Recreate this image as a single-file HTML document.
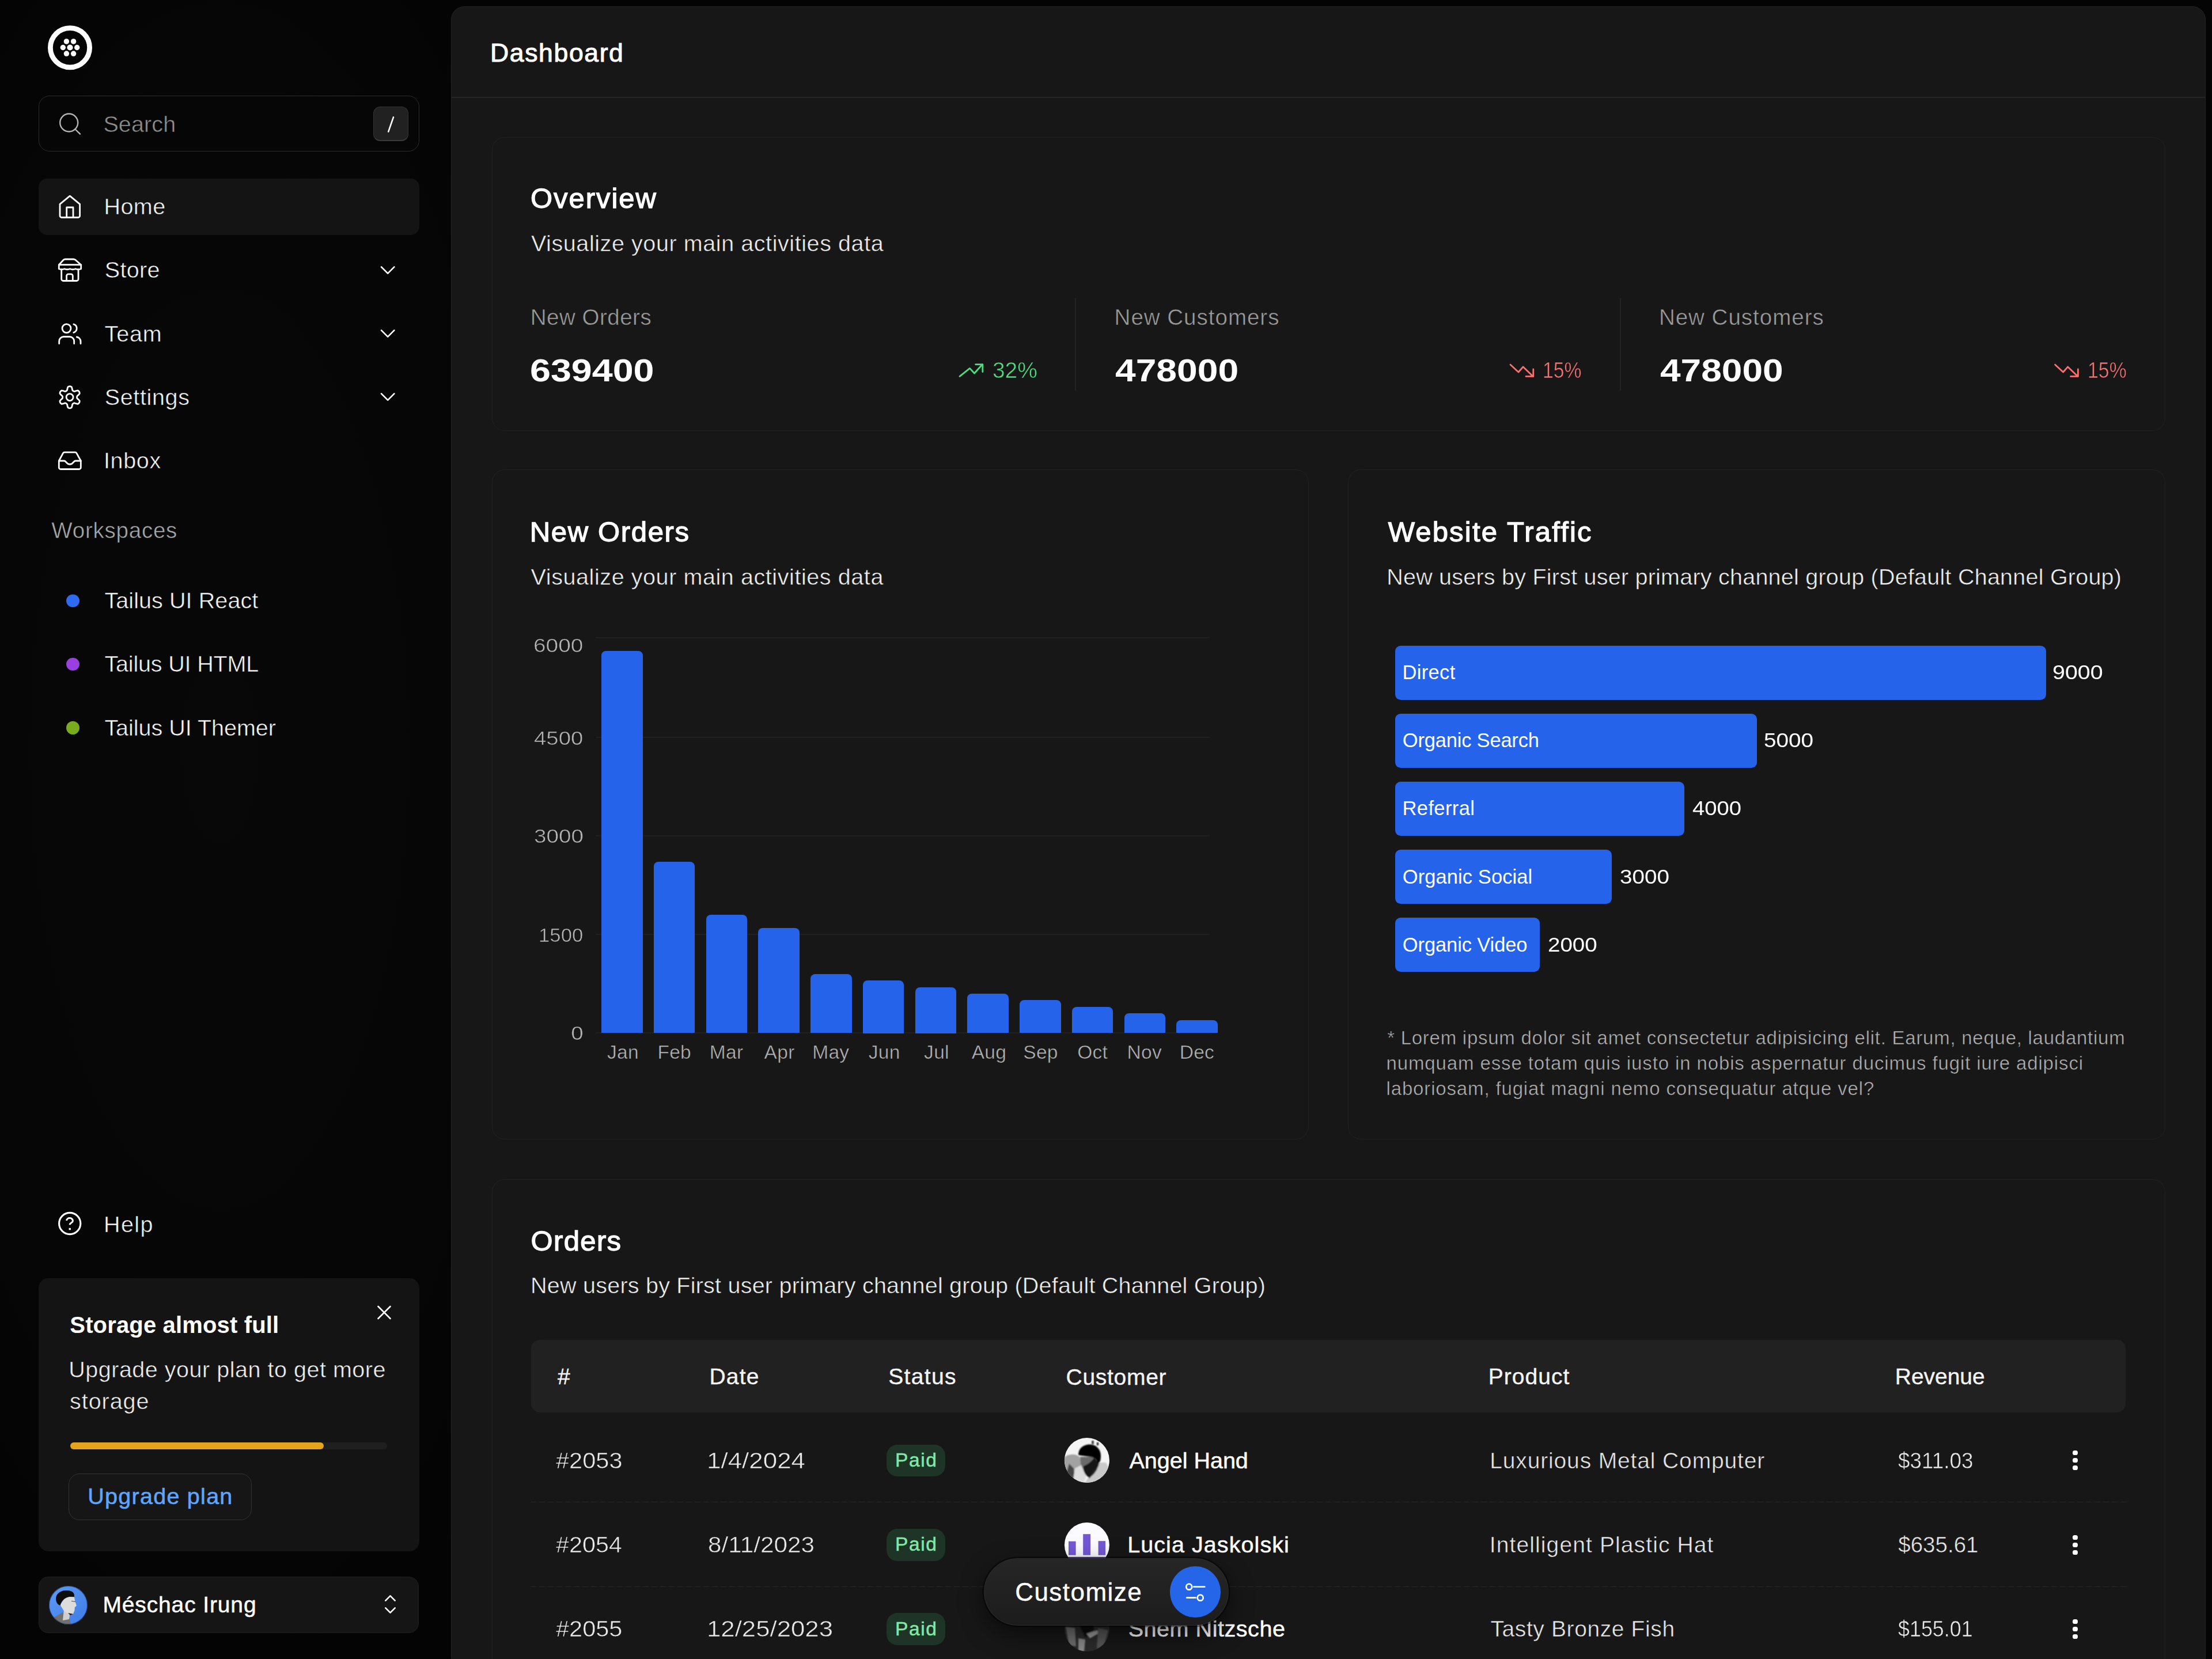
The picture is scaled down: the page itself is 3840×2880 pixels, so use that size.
<!DOCTYPE html>
<html lang="en"><head><meta charset="utf-8"><title>Dashboard</title>
<style>
html,body{margin:0;padding:0;}
body{width:3840px;height:2880px;overflow:hidden;position:relative;background:#040404;font-family:"Liberation Sans",sans-serif;color:#fff;}
.b{position:absolute;box-sizing:border-box;}
.t{position:absolute;white-space:nowrap;font-kerning:normal;}
svg{overflow:visible;}
</style></head><body>
<div class="b" style="left:0px;top:0px;width:3840px;height:2880px;background:radial-gradient(ellipse 700px 1700px at 380px 1300px, #080808 0%, #060606 60%, #040404 100%);"></div>
<aside>
<svg class="b" style="left:78px;top:40px;" width="88" height="88" viewBox="78 40 88 88" fill="none" stroke="#fff" stroke-width="2.8" stroke-linecap="round" stroke-linejoin="round"><circle cx="121.5" cy="82.7" r="34.1" stroke-width="8.8"/><circle cx="133.70" cy="82.50" r="4.7" fill="#fff" stroke="none"/><circle cx="127.60" cy="93.07" r="4.7" fill="#fff" stroke="none"/><circle cx="115.40" cy="93.07" r="4.7" fill="#fff" stroke="none"/><circle cx="109.30" cy="82.50" r="4.7" fill="#fff" stroke="none"/><circle cx="115.40" cy="71.93" r="4.7" fill="#fff" stroke="none"/><circle cx="127.60" cy="71.93" r="4.7" fill="#fff" stroke="none"/><circle cx="121.5" cy="82.5" r="5.1" fill="#fff" stroke="none"/></svg>
<div class="b" style="left:67px;top:166px;width:660.5px;height:97.3px;background:#060606;border-radius:19px;border:1.5px solid #2c2c2c;"></div>
<svg class="b" style="left:98px;top:192px;" width="48" height="48" viewBox="98 192 48 48" fill="none" stroke="#b4b4b4" stroke-width="2.4" stroke-linecap="round" stroke-linejoin="round"><circle cx="119.7" cy="213" r="15.5"/><path d="M131.2 225 L139 232.7"/></svg>
<div class="t" style="left:179.4px;top:189.7px;font-size:39.5px;line-height:51px;color:#8e8e8e;letter-spacing:0.11px;-webkit-text-stroke:0.55px #060606;">Search</div>
<div class="b" style="left:648px;top:185px;width:60.5px;height:60px;background:#212121;border-radius:12px;border:1.5px solid #343434;border-bottom:2.5px solid #3a3a3a;"></div>
<svg class="b" style="left:660px;top:195px;" width="40" height="40" viewBox="660 195 40 40" fill="none" stroke="#fff" stroke-width="2.6" stroke-linecap="round" stroke-linejoin="round"><path d="M674.2 228.6 L683 203.4"/></svg>
<div class="b" style="left:67px;top:310px;width:661px;height:97.5px;background:#141414;border-radius:15px;"></div>
<svg class="b" style="left:98px;top:334px;" width="48" height="50" viewBox="98 334 48 50" fill="none" stroke="#fff" stroke-width="2.8" stroke-linecap="round" stroke-linejoin="round"><path d="M104 354.3 L121.3 340.2 L138.6 354.3 V374.5 a3 3 0 0 1 -3 3 H107 a3 3 0 0 1 -3 -3 Z"/><path d="M115.7 377.5 V360 H127 V377.5"/></svg>
<div class="t" style="left:180.4px;top:333.1px;font-size:39.5px;line-height:51px;color:#f5f5f5;letter-spacing:0.46px;-webkit-text-stroke:0.55px #141414;">Home</div>
<svg class="b" style="left:96px;top:444px;" width="52" height="50" viewBox="96 444 52 50" fill="none" stroke="#fff" stroke-width="2.8" stroke-linecap="round" stroke-linejoin="round"><path d="M102.3 459.7 L109.9 451.5 Q111.3 450 113.3 450 H127.6 Q129.5 450 131 451.2 L140.7 459.7 Z"/><path d="M102.3 459.7 V466.8 q4.8 1.9 9.6 0 q4.8 1.9 9.6 0 q4.8 1.9 9.6 0 q4.8 1.9 9.6 0 V459.7"/><path d="M106.7 468 V484.5 a3 3 0 0 0 3 3 H133 a3 3 0 0 0 3 -3 V468"/><path d="M115.6 487.5 V478.8 a3 3 0 0 1 3 -3 H123.3 a3 3 0 0 1 3 3 V487.5"/></svg>
<div class="t" style="left:181.8px;top:443.3px;font-size:39.5px;line-height:51px;color:#f5f5f5;letter-spacing:0.32px;-webkit-text-stroke:0.55px #070707;">Store</div>
<svg class="b" style="left:96px;top:556px;" width="52" height="48" viewBox="96 556 52 48" fill="none" stroke="#fff" stroke-width="2.8" stroke-linecap="round" stroke-linejoin="round"><circle cx="115.5" cy="570.1" r="7.5"/><path d="M102.7 596.5 V592.5 a8 8 0 0 1 8 -8 H120.7 a8 8 0 0 1 8 8 V596.5"/><path d="M127.8 562.9 a7.5 7.5 0 0 1 0 14.4"/><path d="M133.3 585 a8 8 0 0 1 6.7 7.7 V596.5"/></svg>
<div class="t" style="left:181.6px;top:553.8px;font-size:39.5px;line-height:51px;color:#f5f5f5;letter-spacing:0.82px;-webkit-text-stroke:0.55px #070707;">Team</div>
<svg class="b" style="left:96px;top:664px;" width="52" height="52" viewBox="96 664 52 52" fill="none" stroke="#fff" stroke-width="2.8" stroke-linecap="round" stroke-linejoin="round"><path d="M133.50 689.60 L133.65 690.70 L134.13 691.90 L136.27 693.66 L138.17 695.81 L138.14 697.55 L137.55 699.10 L136.51 700.39 L135.02 701.28 L132.20 700.70 L129.61 699.74 L128.32 699.92 L127.30 700.34 L126.42 701.01 L125.63 702.04 L125.16 704.77 L124.25 707.49 L122.74 708.33 L121.10 708.60 L119.46 708.33 L117.95 707.49 L117.04 704.77 L116.57 702.04 L115.78 701.01 L114.90 700.34 L113.88 699.92 L112.59 699.74 L110.00 700.70 L107.18 701.28 L105.69 700.39 L104.65 699.10 L104.06 697.55 L104.03 695.81 L105.93 693.66 L108.07 691.90 L108.55 690.70 L108.70 689.60 L108.55 688.50 L108.07 687.30 L105.93 685.54 L104.03 683.39 L104.06 681.65 L104.65 680.10 L105.69 678.81 L107.18 677.92 L110.00 678.50 L112.59 679.46 L113.88 679.28 L114.90 678.86 L115.78 678.19 L116.57 677.16 L117.04 674.43 L117.95 671.71 L119.46 670.87 L121.10 670.60 L122.74 670.87 L124.25 671.71 L125.16 674.43 L125.63 677.16 L126.42 678.19 L127.30 678.86 L128.32 679.28 L129.61 679.46 L132.20 678.50 L135.02 677.92 L136.51 678.81 L137.55 680.10 L138.14 681.65 L138.17 683.39 L136.27 685.54 L134.13 687.30 L133.65 688.50 Z"/><circle cx="121.1" cy="689.6" r="6"/></svg>
<div class="t" style="left:181.8px;top:664.1px;font-size:39.5px;line-height:51px;color:#f5f5f5;letter-spacing:0.63px;-webkit-text-stroke:0.55px #070707;">Settings</div>
<svg class="b" style="left:96px;top:780px;" width="52" height="42" viewBox="96 780 52 42" fill="none" stroke="#fff" stroke-width="2.8" stroke-linecap="round" stroke-linejoin="round"><path d="M102.3 800 L109.5 786.6 a3 3 0 0 1 2.6 -1.5 H130.3 a3 3 0 0 1 2.6 1.5 L140.3 800 V811.5 a3 3 0 0 1 -3 3 H105.3 a3 3 0 0 1 -3 -3 Z"/><path d="M102.3 800 H111.5 c3.5 0 3.5 6 9.7 6 c6.2 0 6.2 -6 9.7 -6 H140.3"/></svg>
<div class="t" style="left:180.0px;top:774.3px;font-size:39.5px;line-height:51px;color:#f5f5f5;letter-spacing:0.64px;-webkit-text-stroke:0.55px #070707;">Inbox</div>
<svg class="b" style="left:655px;top:454.7px;" width="36" height="28" viewBox="655 454.7 36 28" fill="none" stroke="#fff" stroke-width="2.6" stroke-linecap="round" stroke-linejoin="round"><path d="M662 463.09999999999997 L673.2 474.3 L684.4 463.09999999999997"/></svg>
<svg class="b" style="left:655px;top:565px;" width="36" height="28" viewBox="655 565 36 28" fill="none" stroke="#fff" stroke-width="2.6" stroke-linecap="round" stroke-linejoin="round"><path d="M662 573.4 L673.2 584.6 L684.4 573.4"/></svg>
<svg class="b" style="left:655px;top:675.3px;" width="36" height="28" viewBox="655 675.3 36 28" fill="none" stroke="#fff" stroke-width="2.6" stroke-linecap="round" stroke-linejoin="round"><path d="M662 683.6999999999999 L673.2 694.9 L684.4 683.6999999999999"/></svg>
<div class="t" style="left:89.3px;top:896.2px;font-size:38.5px;line-height:50px;color:#a8a8a8;letter-spacing:0.77px;-webkit-text-stroke:0.55px #070707;">Workspaces</div>
<div class="b" style="left:115.4px;top:1031.7px;width:22.4px;height:22.4px;background:#2f6bf0;border-radius:12px;"></div>
<div class="t" style="left:181.4px;top:1017.4px;font-size:39.5px;line-height:51px;color:#f5f5f5;letter-spacing:0.09px;-webkit-text-stroke:0.55px #070707;">Tailus UI React</div>
<div class="b" style="left:115.4px;top:1141.6px;width:22.4px;height:22.4px;background:#9a3fe0;border-radius:12px;"></div>
<div class="t" style="left:181.4px;top:1127.3px;font-size:39.5px;line-height:51px;color:#f5f5f5;letter-spacing:-0.16px;-webkit-text-stroke:0.55px #070707;">Tailus UI HTML</div>
<div class="b" style="left:115.4px;top:1252.3px;width:22.4px;height:22.4px;background:#79ab1c;border-radius:12px;"></div>
<div class="t" style="left:181.4px;top:1238.0px;font-size:39.5px;line-height:51px;color:#f5f5f5;letter-spacing:-0.02px;-webkit-text-stroke:0.55px #070707;">Tailus UI Themer</div>
<svg class="b" style="left:96px;top:2099px;" width="50" height="50" viewBox="96 2099 50 50" fill="none" stroke="#fff" stroke-width="3.0" stroke-linecap="round" stroke-linejoin="round"><circle cx="121.2" cy="2124" r="18.6" stroke-width="3.1"/><path d="M115.6 2118.9 a5.4 4.6 0 0 1 10.8 0.5 c0 3.4 -5.3 3.5 -5.3 6.9" stroke-linecap="butt"/><rect x="119.6" y="2131.8" width="3.3" height="3.4" fill="#fff" stroke="none"/></svg>
<div class="t" style="left:180.0px;top:2099.8px;font-size:39.5px;line-height:51px;color:#f5f5f5;letter-spacing:1.40px;-webkit-text-stroke:0.55px #070707;">Help</div>
<div class="b" style="left:67px;top:2219px;width:660.5px;height:473.5px;background:#141414;border-radius:17px;"></div>
<svg class="b" style="left:650px;top:2262px;" width="34" height="34" viewBox="650 2262 34 34" fill="none" stroke="#fff" stroke-width="2.6" stroke-linecap="round" stroke-linejoin="round"><path d="M656.5 2268 L677.5 2289 M677.5 2268 L656.5 2289"/></svg>
<div class="t" style="left:121.3px;top:2274.1px;font-size:40px;line-height:52px;color:#fff;font-weight:700;letter-spacing:0.16px;">Storage almost full</div>
<div class="t" style="left:119.2px;top:2352.3px;font-size:39.5px;line-height:51px;color:#f0f0f0;letter-spacing:0.52px;-webkit-text-stroke:0.55px #141414;">Upgrade your plan to get more</div>
<div class="t" style="left:121.1px;top:2407.3px;font-size:39.5px;line-height:51px;color:#f0f0f0;letter-spacing:0.94px;-webkit-text-stroke:0.55px #141414;">storage</div>
<div class="b" style="left:122px;top:2504px;width:550px;height:12px;background:#1f1f1f;border-radius:6px;"></div>
<div class="b" style="left:122px;top:2504px;width:440px;height:12px;background:#e6a31c;border-radius:6px;"></div>
<div class="b" style="left:119px;top:2557.5px;width:317.5px;height:81.5px;background:#161616;border-radius:19px;border:1.5px solid #333;"></div>
<div class="t" style="left:152.3px;top:2572.3px;font-size:39.5px;line-height:51px;color:#60a5fa;letter-spacing:1.26px;-webkit-text-stroke:0.6px #60a5fa;">Upgrade plan</div>
<div class="b" style="left:67px;top:2737px;width:660px;height:98px;background:#151515;border-radius:17px;border:1.5px solid #1f1f1f;"></div>
<svg class="b" style="left:85px;top:2753px" width="67" height="67" viewBox="85 2753 67 67"><defs><clipPath id="cu"><circle cx="118.5" cy="2786.5" r="33.5"/></clipPath><linearGradient id="gu" x1="0" y1="0" x2="1" y2="1"><stop offset="0" stop-color="#5c9cf5"/><stop offset="1" stop-color="#3f7be6"/></linearGradient><filter id="fu" x="-20%" y="-20%" width="140%" height="140%"><feGaussianBlur stdDeviation="0.7"/></filter></defs><g clip-path="url(#cu)"><rect x="85" y="2753" width="67" height="67" fill="url(#gu)"/><g filter="url(#fu)"><path d="M93 2808 L109 2799 L121 2810 L123 2821 L96 2822 Z" fill="#6f6f6f"/><path d="M111 2794 L109 2813 L120 2811 L121.5 2800 Z" fill="#cfcfcf"/><path d="M104.5 2786 L112 2775 L121 2771.5 L128.8 2772 L130.2 2779 L132.8 2787.5 L129.8 2790.3 L129.5 2795.5 L127 2801.8 L119 2801.5 L110.5 2796 Z" fill="#dcdcdc"/><path d="M118 2800 L127 2802 L122 2804 Z" fill="#222"/><path d="M97.3 2778 C95.8 2766 106 2760.3 117 2761 C125.5 2761.5 129.8 2765 129 2772.3 L121 2772 C113 2773 106.5 2778.5 104.6 2787 C100.5 2786 98 2782.5 97.3 2778 Z" fill="#0b0b0f"/><path d="M124 2779.5 L131 2780.5" stroke="#444" stroke-width="1.2"/></g></g><circle cx="118.5" cy="2786.5" r="33" fill="none" stroke="#0a1630" stroke-opacity=".55" stroke-width="1.2"/></svg>
<div class="t" style="left:178.4px;top:2759.5px;font-size:39px;line-height:51px;color:#fff;letter-spacing:0.87px;-webkit-text-stroke:0.5px #fff;">Méschac Irung</div>
<svg class="b" style="left:662px;top:2766px;" width="32" height="40" viewBox="662 2766 32 40" fill="none" stroke="#fff" stroke-width="2.6" stroke-linecap="round" stroke-linejoin="round"><path d="M669.3 2778.6 L677.5 2770.4 L685.7 2778.6 M669.3 2791.4 L677.5 2799.6 L685.7 2791.4"/></svg>
</aside>
<main>
<div class="b" style="left:783px;top:11px;width:3046px;height:2889px;background:#171717;border-radius:23px;border:1.5px solid #232323;"></div>
<div class="b" style="left:784px;top:168px;width:3044px;height:2px;background:#242424;"></div>
<div class="t" style="left:851.1px;top:62.5px;font-size:44.5px;line-height:58px;color:#fff;letter-spacing:1.63px;-webkit-text-stroke:1.0px #fff;">Dashboard</div>
<div class="b" style="left:853.5px;top:237.5px;width:2905.0px;height:510.0px;background:#171717;border-radius:22px;border:1.5px solid #222;"></div>
<div class="t" style="left:920.9px;top:312.4px;font-size:49px;line-height:64px;color:#fff;letter-spacing:1.97px;-webkit-text-stroke:1.3px #fff;">Overview</div>
<div class="t" style="left:921.9px;top:396.7px;font-size:39.5px;line-height:51px;color:#f0f0f0;letter-spacing:0.58px;-webkit-text-stroke:0.55px #171717;">Visualize your main activities data</div>
<div class="t" style="left:920.8px;top:526.0px;font-size:38.5px;line-height:50px;color:#9c9c9c;letter-spacing:0.50px;-webkit-text-stroke:0.55px #171717;">New Orders</div>
<div class="t" style="left:919.6px;top:605.9px;font-size:56px;line-height:73px;color:#fff;font-weight:700;transform:scaleX(1.1533);transform-origin:0 0;">639400</div>
<div class="b" style="left:1866px;top:517px;width:2px;height:161px;background:#232323;"></div>
<div class="b" style="left:2812px;top:517px;width:2px;height:161px;background:#232323;"></div>
<svg class="b" style="left:1660px;top:622px;" width="52" height="40" viewBox="1660 622 52 40" fill="none" stroke="#4ade80" stroke-width="2.8" stroke-linecap="round" stroke-linejoin="round"><path d="M1666 653.3 L1683.5 639.4 L1691.5 648 L1705.3 632.8"/><path d="M1693.6 632.6 H1705.8 V645.6"/></svg>
<div class="t" style="left:1723.2px;top:616.6px;font-size:39.5px;line-height:51px;color:#4ade80;transform:scaleX(0.9841);transform-origin:0 0;-webkit-text-stroke:0.55px #171717;">32%</div>
<div class="t" style="left:1934.6px;top:526.0px;font-size:38.5px;line-height:50px;color:#9c9c9c;letter-spacing:1.00px;-webkit-text-stroke:0.55px #171717;">New Customers</div>
<div class="t" style="left:1936.0px;top:605.9px;font-size:56px;line-height:73px;color:#fff;font-weight:700;transform:scaleX(1.1457);transform-origin:0 0;">478000</div>
<svg class="b" style="left:2615px;top:622px;" width="52" height="40" viewBox="2615 622 52 40" fill="none" stroke="#f87171" stroke-width="2.8" stroke-linecap="round" stroke-linejoin="round"><path d="M2622.0 633 L2636.0 646 L2644.0 636.8 L2661.2 653.2"/><path d="M2649.0 653.4 H2661.8 V641"/></svg>
<div class="t" style="left:2678.2px;top:616.6px;font-size:39.5px;line-height:51px;color:#f87171;transform:scaleX(0.8543);transform-origin:0 0;-webkit-text-stroke:0.55px #171717;">15%</div>
<div class="t" style="left:2879.9px;top:525.7px;font-size:38.5px;line-height:50px;color:#9c9c9c;letter-spacing:1.00px;-webkit-text-stroke:0.55px #171717;">New Customers</div>
<div class="t" style="left:2882.0px;top:605.9px;font-size:56px;line-height:73px;color:#fff;font-weight:700;transform:scaleX(1.1430);transform-origin:0 0;">478000</div>
<svg class="b" style="left:3560px;top:622px;" width="52" height="40" viewBox="3560 622 52 40" fill="none" stroke="#f87171" stroke-width="2.8" stroke-linecap="round" stroke-linejoin="round"><path d="M3567.6 633 L3581.6 646 L3589.6 636.8 L3606.8 653.2"/><path d="M3594.6 653.4 H3607.4 V641"/></svg>
<div class="t" style="left:3623.7px;top:616.6px;font-size:39.5px;line-height:51px;color:#f87171;transform:scaleX(0.8570);transform-origin:0 0;-webkit-text-stroke:0.55px #171717;">15%</div>
<div class="b" style="left:854px;top:815px;width:1418px;height:1163px;background:#171717;border-radius:22px;border:1.5px solid #222;"></div>
<div class="t" style="left:919.7px;top:891.0px;font-size:49px;line-height:64px;color:#fff;letter-spacing:1.67px;-webkit-text-stroke:1.3px #fff;">New Orders</div>
<div class="t" style="left:921.6px;top:976.2px;font-size:39.5px;line-height:51px;color:#f0f0f0;letter-spacing:0.58px;-webkit-text-stroke:0.55px #171717;">Visualize your main activities data</div>
<div class="b" style="left:1034px;top:1106.3px;width:1066px;height:1.4px;background:#202020;"></div>
<div class="b" style="left:1034px;top:1279.3px;width:1066px;height:1.4px;background:#202020;"></div>
<div class="b" style="left:1034px;top:1450.3px;width:1066px;height:1.4px;background:#202020;"></div>
<div class="b" style="left:1034px;top:1621.3px;width:1066px;height:1.4px;background:#202020;"></div>
<div class="b" style="left:1034px;top:1792.3px;width:1066px;height:1.4px;background:#202020;"></div>
<div class="b" style="left:1044.0px;top:1130.4px;width:71.5px;height:663.1px;background:#2563eb;border-radius:8px 8px 0 0;"></div>
<div class="t" style="left:1054.0px;top:1805.4px;font-size:33.5px;line-height:44px;color:#b4b4b4;letter-spacing:0.3px;-webkit-text-stroke:0.55px #171717;">Jan</div>
<div class="b" style="left:1134.8px;top:1496.2px;width:71.4px;height:297.3px;background:#2563eb;border-radius:8px 8px 0 0;"></div>
<div class="t" style="left:1141.4px;top:1805.4px;font-size:33.5px;line-height:44px;color:#b4b4b4;letter-spacing:0.3px;-webkit-text-stroke:0.55px #171717;">Feb</div>
<div class="b" style="left:1225.5px;top:1587.7px;width:71.5px;height:205.8px;background:#2563eb;border-radius:8px 8px 0 0;"></div>
<div class="t" style="left:1231.8px;top:1805.4px;font-size:33.5px;line-height:44px;color:#b4b4b4;letter-spacing:0.3px;-webkit-text-stroke:0.55px #171717;">Mar</div>
<div class="b" style="left:1316.2px;top:1610.6px;width:71.6px;height:182.9px;background:#2563eb;border-radius:8px 8px 0 0;"></div>
<div class="t" style="left:1326.6px;top:1805.4px;font-size:33.5px;line-height:44px;color:#b4b4b4;letter-spacing:0.3px;-webkit-text-stroke:0.55px #171717;">Apr</div>
<div class="b" style="left:1407.0px;top:1690.6px;width:71.5px;height:102.9px;background:#2563eb;border-radius:8px 8px 0 0;"></div>
<div class="t" style="left:1410.2px;top:1805.4px;font-size:33.5px;line-height:44px;color:#b4b4b4;letter-spacing:0.3px;-webkit-text-stroke:0.55px #171717;">May</div>
<div class="b" style="left:1497.8px;top:1702.0px;width:71.4px;height:91.5px;background:#2563eb;border-radius:8px 8px 0 0;"></div>
<div class="t" style="left:1507.8px;top:1805.4px;font-size:33.5px;line-height:44px;color:#b4b4b4;letter-spacing:0.3px;-webkit-text-stroke:0.55px #171717;">Jun</div>
<div class="b" style="left:1588.5px;top:1713.5px;width:71.5px;height:80.0px;background:#2563eb;border-radius:8px 8px 0 0;"></div>
<div class="t" style="left:1604.1px;top:1805.4px;font-size:33.5px;line-height:44px;color:#b4b4b4;letter-spacing:0.3px;-webkit-text-stroke:0.55px #171717;">Jul</div>
<div class="b" style="left:1679.2px;top:1724.9px;width:71.6px;height:68.6px;background:#2563eb;border-radius:8px 8px 0 0;"></div>
<div class="t" style="left:1686.7px;top:1805.4px;font-size:33.5px;line-height:44px;color:#b4b4b4;letter-spacing:0.3px;-webkit-text-stroke:0.55px #171717;">Aug</div>
<div class="b" style="left:1770.0px;top:1736.3px;width:71.5px;height:57.2px;background:#2563eb;border-radius:8px 8px 0 0;"></div>
<div class="t" style="left:1776.3px;top:1805.4px;font-size:33.5px;line-height:44px;color:#b4b4b4;letter-spacing:0.3px;-webkit-text-stroke:0.55px #171717;">Sep</div>
<div class="b" style="left:1860.8px;top:1747.8px;width:71.4px;height:45.7px;background:#2563eb;border-radius:8px 8px 0 0;"></div>
<div class="t" style="left:1870.2px;top:1805.4px;font-size:33.5px;line-height:44px;color:#b4b4b4;letter-spacing:0.3px;-webkit-text-stroke:0.55px #171717;">Oct</div>
<div class="b" style="left:1951.5px;top:1759.2px;width:71.5px;height:34.3px;background:#2563eb;border-radius:8px 8px 0 0;"></div>
<div class="t" style="left:1956.6px;top:1805.4px;font-size:33.5px;line-height:44px;color:#b4b4b4;letter-spacing:0.3px;-webkit-text-stroke:0.55px #171717;">Nov</div>
<div class="b" style="left:2042.2px;top:1770.6px;width:71.6px;height:22.9px;background:#2563eb;border-radius:8px 8px 0 0;"></div>
<div class="t" style="left:2047.7px;top:1805.4px;font-size:33.5px;line-height:44px;color:#b4b4b4;letter-spacing:0.3px;-webkit-text-stroke:0.55px #171717;">Dec</div>
<div class="t" style="left:926.2px;top:1098.9px;font-size:33.5px;line-height:44px;color:#b4b4b4;transform:scaleX(1.1596);transform-origin:0 0;-webkit-text-stroke:0.55px #171717;">6000</div>
<div class="t" style="left:927.3px;top:1259.9px;font-size:33.5px;line-height:44px;color:#b4b4b4;transform:scaleX(1.1446);transform-origin:0 0;-webkit-text-stroke:0.55px #171717;">4500</div>
<div class="t" style="left:926.7px;top:1430.4px;font-size:33.5px;line-height:44px;color:#b4b4b4;transform:scaleX(1.1527);transform-origin:0 0;-webkit-text-stroke:0.55px #171717;">3000</div>
<div class="t" style="left:935.1px;top:1601.8px;font-size:33.5px;line-height:44px;color:#b4b4b4;transform:scaleX(1.0382);transform-origin:0 0;-webkit-text-stroke:0.55px #171717;">1500</div>
<div class="t" style="left:993.7px;top:1771.7px;font-size:33.5px;line-height:44px;color:#b4b4b4;transform:scaleX(1.15);transform-origin:100% 0;-webkit-text-stroke:0.55px #171717;">0</div>
<div class="b" style="left:2340px;top:815px;width:1418.5px;height:1163px;background:#171717;border-radius:22px;border:1.5px solid #222;"></div>
<div class="t" style="left:2409.7px;top:891.0px;font-size:49px;line-height:64px;color:#fff;letter-spacing:2.19px;-webkit-text-stroke:1.3px #fff;">Website Traffic</div>
<div class="t" style="left:2407.2px;top:975.6px;font-size:39.5px;line-height:51px;color:#f0f0f0;letter-spacing:0.23px;-webkit-text-stroke:0.55px #171717;">New users by First user primary channel group (Default Channel Group)</div>
<div class="b" style="left:2421.5px;top:1120.5px;width:1130.8px;height:94.0px;background:#2563eb;border-radius:9.5px;"></div>
<div class="t" style="left:2434.5px;top:1145.2px;font-size:34.5px;line-height:45px;color:#fff;letter-spacing:0.34px;">Direct</div>
<div class="t" style="left:3562.9px;top:1145.2px;font-size:34.5px;line-height:45px;color:#fff;transform:scaleX(1.1425);transform-origin:0 0;">9000</div>
<div class="b" style="left:2421.5px;top:1238.6px;width:628.3px;height:94.0px;background:#2563eb;border-radius:9.5px;"></div>
<div class="t" style="left:2434.8px;top:1263.3px;font-size:34.5px;line-height:45px;color:#fff;letter-spacing:-0.20px;">Organic Search</div>
<div class="t" style="left:3062.3px;top:1263.3px;font-size:34.5px;line-height:45px;color:#fff;transform:scaleX(1.1227);transform-origin:0 0;">5000</div>
<div class="b" style="left:2421.5px;top:1356.7px;width:502.6px;height:94.0px;background:#2563eb;border-radius:9.5px;"></div>
<div class="t" style="left:2434.5px;top:1381.4px;font-size:34.5px;line-height:45px;color:#fff;letter-spacing:0.39px;">Referral</div>
<div class="t" style="left:2937.7px;top:1381.4px;font-size:34.5px;line-height:45px;color:#fff;transform:scaleX(1.1071);transform-origin:0 0;">4000</div>
<div class="b" style="left:2421.5px;top:1474.8px;width:376.9px;height:94.0px;background:#2563eb;border-radius:9.5px;"></div>
<div class="t" style="left:2434.8px;top:1499.5px;font-size:34.5px;line-height:45px;color:#fff;letter-spacing:0.08px;">Organic Social</div>
<div class="t" style="left:2812.4px;top:1499.5px;font-size:34.5px;line-height:45px;color:#fff;transform:scaleX(1.1189);transform-origin:0 0;">3000</div>
<div class="b" style="left:2421.5px;top:1592.9px;width:251.3px;height:94.0px;background:#2563eb;border-radius:9.5px;"></div>
<div class="t" style="left:2434.8px;top:1617.6px;font-size:34.5px;line-height:45px;color:#fff;letter-spacing:-0.11px;">Organic Video</div>
<div class="t" style="left:2686.7px;top:1617.6px;font-size:34.5px;line-height:45px;color:#fff;transform:scaleX(1.1172);transform-origin:0 0;">2000</div>
<div class="t" style="left:2408.2px;top:1780.1px;font-size:33px;line-height:43px;color:#b2b2b2;letter-spacing:0.74px;-webkit-text-stroke:0.55px #171717;">* Lorem ipsum dolor sit amet consectetur adipisicing elit. Earum, neque, laudantium</div>
<div class="t" style="left:2406.5px;top:1824.1px;font-size:33px;line-height:43px;color:#b2b2b2;letter-spacing:0.88px;-webkit-text-stroke:0.55px #171717;">numquam esse totam quis iusto in nobis aspernatur ducimus fugit iure adipisci</div>
<div class="t" style="left:2406.5px;top:1868.1px;font-size:33px;line-height:43px;color:#b2b2b2;letter-spacing:0.85px;-webkit-text-stroke:0.55px #171717;">laboriosam, fugiat magni nemo consequatur atque vel?</div>
<div class="b" style="left:854px;top:2047px;width:2904.5px;height:913px;background:#171717;border-radius:22px;border:1.5px solid #222;"></div>
<div class="t" style="left:921.5px;top:2122.4px;font-size:49px;line-height:64px;color:#fff;letter-spacing:1.37px;-webkit-text-stroke:1.3px #fff;">Orders</div>
<div class="t" style="left:921.1px;top:2205.8px;font-size:39.5px;line-height:51px;color:#f0f0f0;letter-spacing:0.23px;-webkit-text-stroke:0.55px #171717;">New users by First user primary channel group (Default Channel Group)</div>
<div class="b" style="left:921.5px;top:2325.6px;width:2768.0px;height:126.4px;background:#212121;border-radius:15px;"></div>
<div class="t" style="left:968.0px;top:2364.2px;font-size:39px;line-height:51px;color:#f5f5f5;-webkit-text-stroke:0.4px #f5f5f5;">#</div>
<div class="t" style="left:1231.5px;top:2364.2px;font-size:39px;line-height:51px;color:#f5f5f5;letter-spacing:1.18px;-webkit-text-stroke:0.4px #f5f5f5;">Date</div>
<div class="t" style="left:1542.2px;top:2364.2px;font-size:39px;line-height:51px;color:#f5f5f5;letter-spacing:1.36px;-webkit-text-stroke:0.4px #f5f5f5;">Status</div>
<div class="t" style="left:1850.6px;top:2364.5px;font-size:39px;line-height:51px;color:#f5f5f5;letter-spacing:0.71px;-webkit-text-stroke:0.4px #f5f5f5;">Customer</div>
<div class="t" style="left:2583.8px;top:2364.3px;font-size:39px;line-height:51px;color:#f5f5f5;letter-spacing:1.01px;-webkit-text-stroke:0.4px #f5f5f5;">Product</div>
<div class="t" style="left:3289.8px;top:2364.0px;font-size:39px;line-height:51px;color:#f5f5f5;letter-spacing:-0.05px;-webkit-text-stroke:0.4px #f5f5f5;">Revenue</div>
<div class="t" style="left:964.6px;top:2510.5px;font-size:38.5px;line-height:50px;color:#e8e8e8;transform:scaleX(1.0788);transform-origin:0 0;-webkit-text-stroke:0.55px #171717;">#2053</div>
<div class="t" style="left:1227.2px;top:2510.5px;font-size:38.5px;line-height:50px;color:#e8e8e8;transform:scaleX(1.1414);transform-origin:0 0;-webkit-text-stroke:0.55px #171717;">1/4/2024</div>
<div class="b" style="left:1539.4px;top:2507.8px;width:102.0px;height:55.5px;background:#1d3427;border-radius:19px;"></div>
<div class="t" style="left:1553.9px;top:2513.0px;font-size:33.5px;line-height:44px;color:#82e8a6;letter-spacing:1.65px;-webkit-text-stroke:0.5px #82e8a6;">Paid</div>
<svg class="b" style="left:1847px;top:2495.3px" width="80" height="80" viewBox="1847 2495.3 80 80"><defs><clipPath id="ca0"><circle cx="1886.9" cy="2535.3" r="39"/></clipPath><filter id="fa0" x="-20%" y="-20%" width="140%" height="140%"><feGaussianBlur stdDeviation="1.3"/></filter></defs><g clip-path="url(#ca0)"><rect x="1847" y="2495.3" width="80" height="80" fill="#f4f4f4"/><g filter="url(#fa0)"><path d="M1846 2531.3 C1856 2523.3 1866 2523.3 1874 2529.3 L1880 2545.3 L1868 2561.3 L1850 2559.3 Z" fill="#a2a2a2"/><path d="M1856 2541.3 L1864 2549.3 L1866 2565.3 L1858 2571.3 L1852 2555.3 Z" fill="#444"/><path d="M1892 2561.3 L1908 2539.3 L1920 2539.3 L1928 2555.3 L1926 2577.3 L1880 2579.3 Z" fill="#c9c9c9"/><path d="M1866 2549.3 L1878 2543.3 L1886 2561.3 L1880 2579.3 L1862 2575.3 Z" fill="#dcdcdc"/><path d="M1875 2529.3 L1900 2529.3 L1906 2541.3 L1896 2559.3 L1882 2555.3 L1876 2541.3 Z" fill="#6a6a6a"/><path d="M1881 2545.3 C1888 2543.3 1895 2537.3 1899 2531.3 L1908 2539.3 C1906 2551.3 1899 2561.3 1891 2565.3 C1884 2562.3 1880 2554.3 1881 2545.3 Z" fill="#151515"/><path d="M1872 2526.3 C1872 2514.3 1881 2507.8 1892 2507.8 C1903 2507.8 1911 2516.3 1911 2527.3 C1911 2534.3 1910 2538.3 1907 2541.3 C1905 2534.3 1900 2530.3 1893 2529.3 C1886 2528.3 1878 2527.3 1872 2526.3 Z" fill="#030303"/><path d="M1897 2507.3 v-6 M1905.5 2509.3 v-5" stroke="#1c1c1c" stroke-width="3"/><path d="M1891 2566.3 L1907 2543.3" stroke="#2a2a2a" stroke-width="1.6"/></g></g></svg>
<div class="t" style="left:1960.4px;top:2509.6px;font-size:39.5px;line-height:51px;color:#fff;-webkit-text-stroke:0.5px #fff;">Angel Hand</div>
<div class="t" style="left:2586.2px;top:2509.8px;font-size:39px;line-height:51px;color:#e8e8e8;letter-spacing:0.86px;-webkit-text-stroke:0.55px #171717;">Luxurious Metal Computer</div>
<div class="t" style="left:3295.3px;top:2510.5px;font-size:38.5px;line-height:50px;color:#e8e8e8;transform:scaleX(0.9577);transform-origin:0 0;-webkit-text-stroke:0.55px #171717;">$311.03</div>
<div class="b" style="left:3598.2px;top:2518.2000000000003px;width:8.8px;height:8.2px;background:#fff;border-radius:3.6px;"></div>
<div class="b" style="left:3598.2px;top:2531.2000000000003px;width:8.8px;height:8.2px;background:#fff;border-radius:3.6px;"></div>
<div class="b" style="left:3598.2px;top:2544.2000000000003px;width:8.8px;height:8.2px;background:#fff;border-radius:3.6px;"></div>
<div class="b" style="left:921px;top:2607.1px;width:2774px;height:1.4px;background:repeating-linear-gradient(90deg,#272727 0 10px,#1c1c1c 10px 15px);"></div>
<div class="t" style="left:964.6px;top:2656.8px;font-size:38.5px;line-height:50px;color:#e8e8e8;transform:scaleX(1.0730);transform-origin:0 0;-webkit-text-stroke:0.55px #171717;">#2054</div>
<div class="t" style="left:1228.8px;top:2656.8px;font-size:38.5px;line-height:50px;color:#e8e8e8;transform:scaleX(1.0984);transform-origin:0 0;-webkit-text-stroke:0.55px #171717;">8/11/2023</div>
<div class="b" style="left:1539.4px;top:2654.1000000000004px;width:102.0px;height:55.5px;background:#1d3427;border-radius:19px;"></div>
<div class="t" style="left:1553.9px;top:2659.3px;font-size:33.5px;line-height:44px;color:#82e8a6;letter-spacing:1.65px;-webkit-text-stroke:0.5px #82e8a6;">Paid</div>
<svg class="b" style="left:1847px;top:2641.6000000000004px" width="80" height="80" viewBox="1847 2641.6000000000004 80 80"><defs><clipPath id="ca1"><circle cx="1886.9" cy="2681.6000000000004" r="39"/></clipPath><filter id="fa1" x="-20%" y="-20%" width="140%" height="140%"><feGaussianBlur stdDeviation="1.3"/></filter></defs><g clip-path="url(#ca1)"><rect x="1847" y="2641.6000000000004" width="80" height="80" fill="#fbfaff"/><rect x="1855" y="2675.3" width="12.6" height="24" fill="#7258d3"/><rect x="1880.2" y="2662.8" width="12.8" height="36.5" fill="#7258d3"/><rect x="1906.6" y="2674.8" width="12.4" height="24.5" fill="#7258d3"/><rect x="1847" y="2702.6000000000004" width="80" height="20" fill="#7258d3"/></g></svg>
<div class="t" style="left:1957.2px;top:2655.9px;font-size:39.5px;line-height:51px;color:#fff;letter-spacing:1.07px;-webkit-text-stroke:0.5px #fff;">Lucia Jaskolski</div>
<div class="t" style="left:2585.8px;top:2656.1px;font-size:39px;line-height:51px;color:#e8e8e8;letter-spacing:1.11px;-webkit-text-stroke:0.55px #171717;">Intelligent Plastic Hat</div>
<div class="t" style="left:3295.3px;top:2656.8px;font-size:38.5px;line-height:50px;color:#e8e8e8;-webkit-text-stroke:0.55px #171717;">$635.61</div>
<div class="b" style="left:3598.2px;top:2664.5000000000005px;width:8.8px;height:8.2px;background:#fff;border-radius:3.6px;"></div>
<div class="b" style="left:3598.2px;top:2677.5000000000005px;width:8.8px;height:8.2px;background:#fff;border-radius:3.6px;"></div>
<div class="b" style="left:3598.2px;top:2690.5000000000005px;width:8.8px;height:8.2px;background:#fff;border-radius:3.6px;"></div>
<div class="b" style="left:921px;top:2754.1px;width:2774px;height:1.4px;background:repeating-linear-gradient(90deg,#272727 0 10px,#1c1c1c 10px 15px);"></div>
<div class="t" style="left:964.6px;top:2803.1px;font-size:38.5px;line-height:50px;color:#e8e8e8;transform:scaleX(1.0780);transform-origin:0 0;-webkit-text-stroke:0.55px #171717;">#2055</div>
<div class="t" style="left:1227.3px;top:2803.1px;font-size:38.5px;line-height:50px;color:#e8e8e8;transform:scaleX(1.1364);transform-origin:0 0;-webkit-text-stroke:0.55px #171717;">12/25/2023</div>
<div class="b" style="left:1539.4px;top:2800.4px;width:102.0px;height:55.5px;background:#1d3427;border-radius:19px;"></div>
<div class="t" style="left:1553.9px;top:2805.6px;font-size:33.5px;line-height:44px;color:#82e8a6;letter-spacing:1.65px;-webkit-text-stroke:0.5px #82e8a6;">Paid</div>
<svg class="b" style="left:1847px;top:2787.9px" width="80" height="80" viewBox="1847 2787.9 80 80"><defs><clipPath id="ca2"><circle cx="1886.9" cy="2827.9" r="39"/></clipPath><filter id="fa2" x="-20%" y="-20%" width="140%" height="140%"><feGaussianBlur stdDeviation="1.3"/></filter></defs><g clip-path="url(#ca2)"><rect x="1847" y="2787.9" width="80" height="80" fill="#2b2b2b"/><g filter="url(#fa2)"><path d="M1850 2823.9 L1866 2825.9 L1868 2857.9 L1856 2855.9 Z" fill="#6e6e6e"/><path d="M1874 2821.9 L1898 2819.9 L1900 2837.9 L1884 2841.9 Z" fill="#111"/><path d="M1886 2835.9 L1904 2829.9 L1910 2833.9 L1892 2843.9 Z" fill="#9a9a9a"/><path d="M1906 2825.9 L1924 2829.9 L1916 2857.9 L1904 2861.9 Z" fill="#555"/><path d="M1872 2843.9 L1884 2845.9 L1882 2867.9 L1872 2865.9 Z" fill="#888"/></g></g></svg>
<div class="t" style="left:1958.7px;top:2802.2px;font-size:39.5px;line-height:51px;color:#fff;letter-spacing:0.55px;-webkit-text-stroke:0.5px #fff;">Shem Nitzsche</div>
<div class="t" style="left:2587.4px;top:2802.4px;font-size:39px;line-height:51px;color:#e8e8e8;letter-spacing:0.61px;-webkit-text-stroke:0.55px #171717;">Tasty Bronze Fish</div>
<div class="t" style="left:3295.4px;top:2803.1px;font-size:38.5px;line-height:50px;color:#e8e8e8;transform:scaleX(0.9316);transform-origin:0 0;-webkit-text-stroke:0.55px #171717;">$155.01</div>
<div class="b" style="left:3598.2px;top:2810.8px;width:8.8px;height:8.2px;background:#fff;border-radius:3.6px;"></div>
<div class="b" style="left:3598.2px;top:2823.8px;width:8.8px;height:8.2px;background:#fff;border-radius:3.6px;"></div>
<div class="b" style="left:3598.2px;top:2836.8px;width:8.8px;height:8.2px;background:#fff;border-radius:3.6px;"></div>
<div class="b" style="left:1707.7px;top:2705.3px;width:424.9px;height:116.5px;border-radius:59px;border:1.5px solid #2b2b2b;background:linear-gradient(180deg,#262626,#1c1c1c);box-shadow:0 0 0 2.5px rgba(0,0,0,.45),0 14px 40px rgba(0,0,0,.55);"></div>
<div class="t" style="left:1762.2px;top:2735.0px;font-size:44px;line-height:57px;color:#fff;letter-spacing:1.46px;-webkit-text-stroke:0.4px #fff;">Customize</div>
<div class="b" style="left:2030.5px;top:2719.2px;width:88.6px;height:88.6px;background:#2566e8;border-radius:45px;"></div>
<svg class="b" style="left:2050px;top:2740px;" width="50" height="48" viewBox="2050 2740 50 48" fill="none" stroke="#fff" stroke-width="2.8" stroke-linecap="round" stroke-linejoin="round"><circle cx="2064.2" cy="2754.7" r="5"/><path d="M2072.5 2754.7 H2091.2"/><circle cx="2083.7" cy="2773.7" r="5"/><path d="M2060.2 2773.7 H2075.4"/></svg>
</main>
</body></html>
